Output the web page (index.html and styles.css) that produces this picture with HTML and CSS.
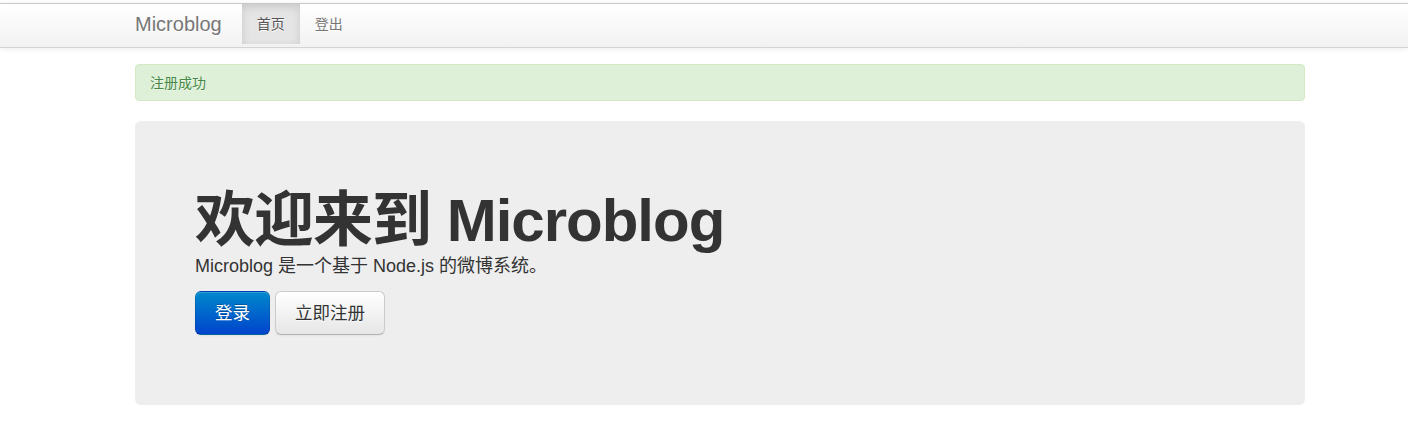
FILE: index.html
```html
<!DOCTYPE html>
<html lang="zh-CN">
<head>
<meta charset="utf-8">
<title>Microblog</title>
<link rel="stylesheet" href="styles.css">
</head>
<body>
<div class="navbar">
  <div class="navbar-inner">
    <div class="container nav-row">
      <a class="brand" href="#">Microblog</a>
      <ul class="nav">
        <li class="active"><a href="#">首页</a></li>
        <li><a href="#">登出</a></li>
      </ul>
    </div>
  </div>
</div>
<div class="container main">
  <div class="alert alert-success">注册成功</div>
  <div class="hero-unit">
    <h1>欢迎来到 Microblog</h1>
    <p class="lead">Microblog 是一个基于 Node.js 的微博系统。</p>
    <p class="actions">
      <a class="btn btn-primary btn-large" href="#">登录</a>
      <a class="btn btn-large" href="#">立即注册</a>
    </p>
  </div>
</div>
</body>
</html>
```
FILE: styles.css
```css
html, body {
  margin: 0;
  padding: 0;
}
body {
  font-family: "Liberation Sans", Arial, "Noto Sans CJK SC", sans-serif;
  font-size: 14px;
  line-height: 20px;
  color: #333;
  background: #fff;
}
a { text-decoration: none; }

.container {
  width: 1170px;
  margin-left: 135px;
}

.navbar {
  padding-top: 3px;
  margin-bottom: 16px;
}
.navbar-inner {
  height: 43px;
  background: linear-gradient(to bottom, #ffffff, #f2f2f2);
  border-top: 1px solid #c8c8c8;
  border-bottom: 1px solid #d4d4d4;
  box-shadow: 0 1px 6px rgba(0,0,0,0.08);
}
.nav-row {
  display: flex;
  align-items: flex-start;
}
.brand {
  display: block;
  padding: 9px 20px 11px 0;
  font-size: 20px;
  line-height: 22px;
  color: #777;
  text-shadow: 0 1px 0 #fff;
}
.nav {
  display: flex;
  list-style: none;
  margin: 0;
  padding: 0;
}
.nav li a {
  display: block;
  padding: 10px 15px;
  font-size: 14px;
  line-height: 20px;
  color: #777;
  text-shadow: 0 1px 0 #fff;
}
.nav li.active a {
  color: #555;
  background: #e5e5e5;
  box-shadow: inset 0 3px 8px rgba(0,0,0,0.125);
}

.alert {
  padding: 8px 35px 7px 14px;
  margin-bottom: 20px;
  border-radius: 4px;
  font-size: 14px;
  line-height: 20px;
  text-shadow: 0 1px 0 rgba(255,255,255,0.5);
}
.alert-success {
  background: #dff0d8;
  border: 1px solid #d6e9c6;
  color: #468847;
}

.hero-unit {
  padding: 60px;
  margin-bottom: 30px;
  background: #eee;
  border-radius: 6px;
  font-size: 18px;
  line-height: 30px;
}
.hero-unit h1 {
  margin: 10px 0 0;
  height: 60px;
  font-size: 60px;
  line-height: 60px;
  font-weight: bold;
  letter-spacing: -1px;
  color: #333;
}
.lead {
  margin: 0 0 10px;
  height: 30px;
}
.actions {
  margin: 0 0 10px;
  display: flex;
  gap: 5px;
}
.btn {
  display: inline-block;
  padding: 11px 19px;
  font-size: 17.5px;
  line-height: 20px;
  border-radius: 6px;
  color: #333;
  text-shadow: 0 1px 1px rgba(255,255,255,0.75);
  background: linear-gradient(to bottom, #ffffff, #e6e6e6);
  border: 1px solid #ccc;
  border-bottom-color: #b3b3b3;
  box-shadow: inset 0 1px 0 rgba(255,255,255,0.2), 0 1px 2px rgba(0,0,0,0.05);
}
.btn-primary {
  color: #fff;
  text-shadow: 0 -1px 0 rgba(0,0,0,0.25);
  background: linear-gradient(to bottom, #0088cc, #0044cc);
  border-color: rgba(0,0,0,0.1) rgba(0,0,0,0.1) rgba(0,0,0,0.25);
}
```
